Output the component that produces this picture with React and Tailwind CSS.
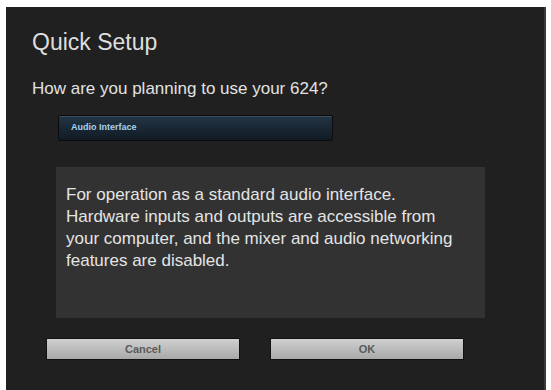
import React from 'react';

const App = () => {
  return (
    <div className="w-[551px] h-[390px] bg-white pt-[7px] pl-[6px] pr-[5px] overflow-hidden font-['Liberation_Sans',Arial,sans-serif]">
      <div className="h-full bg-[#202020] border-r-2 border-[#3a3a3a] pt-[22px] pl-[26px]">
        {/* Title */}
        <h1 className="text-[23px] leading-[26px] text-[#dedede]">Quick Setup</h1>

        <p className="mt-[24px] text-[17px] leading-[19px] text-[#e2e2e2]">
          How are you planning to use your 624?
        </p>

        {/* Mode select */}
        <div className="mt-[17px] ml-[26px] w-[275px] h-[26px] flex items-center pl-[12px] rounded-[2px] border border-[#0c0c0c] bg-gradient-to-b from-[#223545] to-[#111b24] shadow-[inset_0_1px_0_rgba(120,160,190,0.25)]">
          <span className="text-[9px] font-bold text-[#a9d1ee]">Audio Interface</span>
        </div>

        {/* Description */}
        <div className="mt-[26px] ml-[24px] w-[429px] h-[151px] bg-[#323232] pt-[17px] pl-[10px]">
          <p className="text-[17px] leading-[22px] text-[#e4e4e4]">
            For operation as a standard audio interface.
            <br />
            Hardware inputs and outputs are accessible from
            <br />
            your computer, and the mixer and audio networking
            <br />
            features are disabled.
          </p>
        </div>

        {/* Buttons */}
        <div className="mt-[20px] ml-[14px] flex gap-[30px]">
          <button className="w-[194px] h-[22px] border border-[#111] bg-gradient-to-b from-[#d0d0d0] to-[#a9a9a9] text-[11px] font-bold text-[#5a5a5a]">
            Cancel
          </button>
          <button className="w-[194px] h-[22px] border border-[#111] bg-gradient-to-b from-[#d0d0d0] to-[#a9a9a9] text-[11px] font-bold text-[#5a5a5a]">
            OK
          </button>
        </div>
      </div>
    </div>
  );
};

export default App;
